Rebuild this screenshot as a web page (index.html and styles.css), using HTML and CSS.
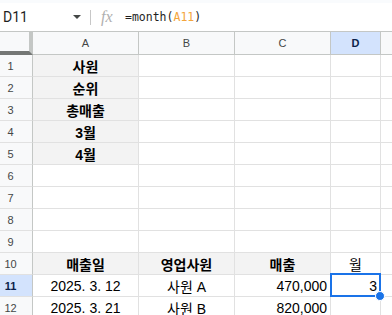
FILE: index.html
```html
<!DOCTYPE html>
<html lang="ko">
<head>
  <meta charset="UTF-8" />
  <title>Sheet</title>
  <link rel="stylesheet" href="styles.css">
</head>
<body>
  <div class="top-band"></div>
  <div class="formula-bar">
    <div class="name-box">D11</div>
    <svg class="caret" width="8" height="4" viewBox="0 0 8 4"><path d="M0 0h8L4 4z" fill="#444746"/></svg>
    <div class="divider"></div>
    <div class="fx">fx</div>
    <div class="formula">=month(<span class="ref">A11</span>)</div>
  </div>

  <div class="grid">
    <div class="corner"></div>
    <div class="col-head">A</div>
    <div class="col-head">B</div>
    <div class="col-head">C</div>
    <div class="col-head sel">D</div>
    <div class="col-head last"></div>

    <div class="row-head">1</div>
    <div class="cell label">사원</div><div class="cell"></div><div class="cell"></div><div class="cell"></div><div class="cell last"></div>
    <div class="row-head">2</div>
    <div class="cell label">순위</div><div class="cell"></div><div class="cell"></div><div class="cell"></div><div class="cell last"></div>
    <div class="row-head">3</div>
    <div class="cell label">총매출</div><div class="cell"></div><div class="cell"></div><div class="cell"></div><div class="cell last"></div>
    <div class="row-head">4</div>
    <div class="cell label">3월</div><div class="cell"></div><div class="cell"></div><div class="cell"></div><div class="cell last"></div>
    <div class="row-head">5</div>
    <div class="cell label">4월</div><div class="cell"></div><div class="cell"></div><div class="cell"></div><div class="cell last"></div>
    <div class="row-head">6</div>
    <div class="cell"></div><div class="cell"></div><div class="cell"></div><div class="cell"></div><div class="cell last"></div>
    <div class="row-head">7</div>
    <div class="cell"></div><div class="cell"></div><div class="cell"></div><div class="cell"></div><div class="cell last"></div>
    <div class="row-head">8</div>
    <div class="cell"></div><div class="cell"></div><div class="cell"></div><div class="cell"></div><div class="cell last"></div>
    <div class="row-head">9</div>
    <div class="cell"></div><div class="cell"></div><div class="cell"></div><div class="cell"></div><div class="cell last"></div>
    <div class="row-head">10</div>
    <div class="cell label">매출일</div><div class="cell label">영업사원</div><div class="cell label">매출</div><div class="cell center">월</div><div class="cell last"></div>
    <div class="row-head sel">11</div>
    <div class="cell center">2025. 3. 12</div><div class="cell center">사원 A</div><div class="cell num">470,000</div><div class="cell num active">3</div><div class="cell last"></div>
    <div class="row-head">12</div>
    <div class="cell center">2025. 3. 21</div><div class="cell center">사원 B</div><div class="cell num">820,000</div><div class="cell"></div><div class="cell last"></div>
  </div>
</body>
</html>
```

FILE: styles.css
```css
body {
  margin: 0;
  background: #fff;
  font-family: "Liberation Sans", Arial, "Noto Sans CJK KR", sans-serif;
  color: #000;
  overflow: hidden;
}
.top-band {
  height: 3px;
  background: #f9fbfd;
}
.formula-bar {
  height: 28px;
  display: flex;
  align-items: center;
  font-family: Roboto, "Liberation Sans", sans-serif;
}
.name-box {
  width: 70px;
  padding-left: 3px;
  font-size: 14px;
  color: #1f1f1f;
}
.caret {
  margin-left: 0;
}
.divider {
  width: 1px;
  height: 15px;
  background: #c7c7c7;
  margin-left: 9px;
}
.fx {
  margin-left: 10px;
  width: 24px;
  font-family: "Liberation Serif", serif;
  font-style: italic;
  font-size: 16px;
  color: #b0b0b0;
}
.formula {
  font-family: "DejaVu Sans Mono", monospace;
  font-size: 11.5px;
  color: #1f1f1f;
}
.ref {
  color: #f4a53c;
}
.grid {
  display: grid;
  grid-template-columns: 33px 106px 96px 96px 50px 1fr;
  grid-template-rows: 24px repeat(12, 22px);
}
.grid > div {
  box-sizing: border-box;
  border-right: 1px solid #e1e1e1;
  border-bottom: 1px solid #e1e1e1;
  display: flex;
  align-items: center;
  white-space: nowrap;
}
.grid > .last {
  border-right: none;
}
.grid > .corner {
  background: #f8f9fa;
  border-top: 1px solid #c4c7c5;
  border-right: 4px solid #c4c7c5;
  border-bottom: 4px solid #747775;
}
.grid > .col-head {
  background: #f8f9fa;
  border-top: 1px solid #c4c7c5;
  border-right-color: #c4c7c5;
  border-bottom-color: #c4c7c5;
  justify-content: center;
  font-size: 11px;
  color: #444746;
}
.grid > .col-head.last {
  border-right: none;
}
.grid > .row-head {
  background: #f8f9fa;
  border-right-color: #c4c7c5;
  justify-content: center;
  padding-right: 11px;
  font-size: 11px;
  color: #444746;
}
.grid > .sel {
  background: #d3e3fd;
  color: #0b1f4a;
  font-weight: bold;
}
.cell {
  font-size: 14px;
  padding: 0 3px;
}
.grid > .label {
  background: #f3f3f3;
  font-weight: bold;
  justify-content: center;
}
.grid > .center {
  justify-content: center;
}
.grid > .num {
  justify-content: flex-end;
}
.active {
  position: relative;
}
.active::before {
  content: "";
  position: absolute;
  top: -2px;
  left: -1px;
  right: -1px;
  bottom: -1px;
  border: 2px solid #1a73e8;
}
.active::after {
  content: "";
  position: absolute;
  right: -5px;
  bottom: -5px;
  width: 8px;
  height: 8px;
  border-radius: 50%;
  background: #1a73e8;
  border: 1px solid #fff;
}
```
